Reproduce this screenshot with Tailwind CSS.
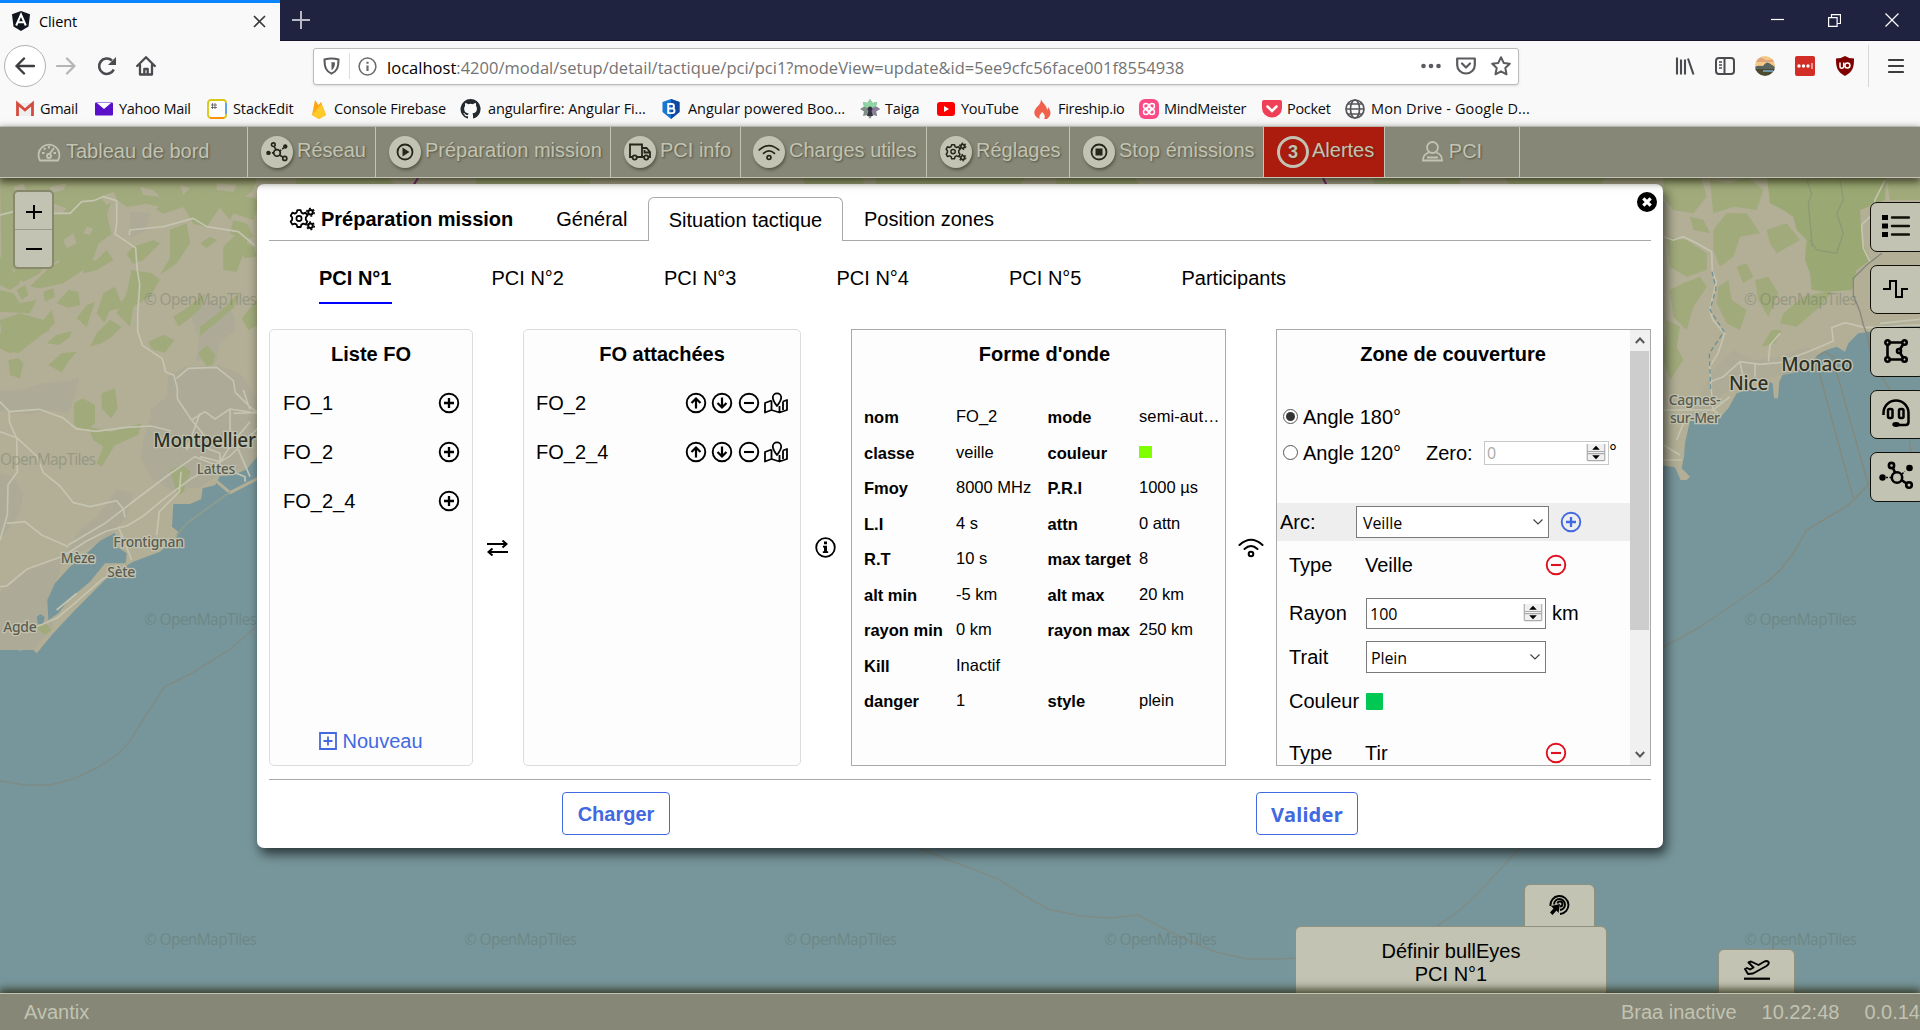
<!DOCTYPE html>
<html lang="fr">
<head>
<meta charset="utf-8">
<title>Client</title>
<script src="https://cdn.jsdelivr.net/npm/@tailwindcss/browser@4"></script>
</head>
<body class="w-[1920px] h-[1030px] overflow-hidden flex flex-col bg-[#c2c3b2] font-['Liberation_Sans',Arial,sans-serif] text-[20px] leading-6 text-black">

<svg class="hidden">
  <defs>
    <symbol id="net" viewBox="0 0 24 24"><g fill="none" stroke="currentColor" stroke-width="1.8"><circle cx="12" cy="13" r="3.6"/><circle cx="8" cy="4" r="2"/><circle cx="20.5" cy="19" r="2.2"/><path d="M9 6l2 4M14.8 15.3l4 2.6"/><path d="M3 13h5M15 11l5-4" stroke-dasharray="2 1.5"/></g><circle cx="2.6" cy="13" r="2.4" fill="currentColor"/><circle cx="21" cy="6" r="2.4" fill="currentColor"/></symbol>
    <symbol id="gears" viewBox="0 0 26 24"><g fill="none" stroke="currentColor"><path d="M7.800 3.200h3.400l.7 2.400 1.900 1 2.300-.9 1.700 2.900-1.500 1.900v2.200l1.500 1.900-1.700 2.900-2.300-.9-1.900 1-.7 2.400H7.800l-.7-2.400-1.900-1-2.300.9-1.700-2.900 1.500-1.900v-2.200L1.200 8.600l1.700-2.900 2.300.9 1.900-1z" stroke-width="1.800" stroke-linejoin="round"/><circle cx="9.500" cy="11.500" r="2.600" stroke-width="1.700"/><circle cx="21" cy="5.200" r="2.300" stroke-width="2"/><circle cx="21" cy="5.200" r="3.800" stroke-width="1.400" stroke-dasharray="2 1.980"/><circle cx="21" cy="18.800" r="2.300" stroke-width="2"/><circle cx="21" cy="18.800" r="3.800" stroke-width="1.400" stroke-dasharray="2 1.980"/></g></symbol>
    <symbol id="wifi" viewBox="0 0 26 20"><g fill="none" stroke="currentColor" stroke-width="2" stroke-linecap="round"><path d="M1.500 7Q13-3.500 24.500 7"/><path d="M6.500 11Q13 5 19.500 11"/><circle cx="13" cy="16" r="2.300"/></g></symbol>
    <symbol id="plusc" viewBox="0 0 22 22"><g fill="none" stroke="currentColor" stroke-width="1.9"><circle cx="11" cy="11" r="9.300"/><path d="M11 6v10M6 11h10" stroke-width="2.300"/></g></symbol>
    <symbol id="minusc" viewBox="0 0 22 22"><g fill="none" stroke="currentColor" stroke-width="1.9"><circle cx="11" cy="11" r="9.300"/><path d="M6 11h10" stroke-width="2.100"/></g></symbol>
    <symbol id="upc" viewBox="0 0 22 22"><g fill="none" stroke="currentColor" stroke-width="1.9"><circle cx="11" cy="11" r="9.300"/><path d="M11 16.500V7M6.500 11L11 6.500l4.500 4.500" stroke-width="2.200"/></g></symbol>
    <symbol id="downc" viewBox="0 0 22 22"><g fill="none" stroke="currentColor" stroke-width="1.9"><circle cx="11" cy="11" r="9.300"/><path d="M11 5.500V15M6.500 11l4.500 4.500 4.500-4.500" stroke-width="2.200"/></g></symbol>
    <symbol id="mapm" viewBox="0 0 24 22"><g fill="none" stroke="currentColor" stroke-width="1.800" stroke-linejoin="round"><path d="M13 14C9.500 9.500 8.800 7.500 8.800 5.500a4.200 4.200 0 0 1 8.400 0C17.200 7.500 16.500 9.500 13 14z"/><path d="M7.500 8.500L1 11v9.500L7.500 18l8 2.500L23 18V8l-4 1.500M7.500 8.500V18M15.500 14v6.500M19 9.500V18"/></g></symbol>
    <symbol id="spin" viewBox="0 0 20 20"><path d="M1 1h18v18H1z" fill="#f0f0f0"/><path d="M.8 1v17.500M19.200 1v17.500M1 9h18M1 11.200h18M1 18.500h18" stroke="#aaa" stroke-width="1.200"/><path d="M10 3l4 4H6zM10 17l4-4H6z"/></symbol>
  </defs>
</svg>

<!-- Browser chrome -->
<header class="h-[127px] shrink-0 bg-[#f9f9fa] border-b border-[#dcdcd8] font-['Open_Sans','Noto_Sans',sans-serif] text-[#0c0c0d]">
  <div class="h-[41px] bg-[#202340] border-b border-[#14152b] flex items-center text-white">
    <div class="w-[280px] h-[41px] bg-[#f9f9fa] border-t-[3px] border-[#0a84ff] text-black flex items-center pl-[11px] pr-[14px] pt-px">
      <svg class="w-5 h-5 -mt-[2px]" viewBox="0 0 20 20"><path d="M10 0l9 3.200-1.500 12.300L10 20l-7.500-4.500L1 3.200z" fill="#10141c"/><path d="M5.200 14.500L10 3.500l4.800 11M7 11.200h6" fill="none" stroke="#fff" stroke-width="2"/></svg>
      <span class="ml-2 text-[14.5px] tracking-[-0.1px]">Client</span>
      <svg class="ml-auto w-[13px] h-[13px] -mt-px" viewBox="0 0 13 13" stroke="#3a3a3c" stroke-width="1.700"><path d="M1 1l11 11M12 1L1 12"/></svg>
    </div>
    <svg class="ml-3 w-[18px] h-[18px]" viewBox="0 0 18 18" stroke="#b9bac6" stroke-width="2"><path d="M9 0v18M0 9h18"/></svg>
    <div class="ml-auto mr-[21px] flex items-center gap-[44px]">
      <svg class="w-[13px] h-[14px]" viewBox="0 0 13 14"><path d="M0 6.500h13" stroke="#fff" stroke-width="1.200"/></svg>
      <svg class="w-[13px] h-[13px]" viewBox="0 0 13 13" fill="none" stroke="#fff" stroke-width="1.200"><path d="M.6 3.600h8.500v8.800H.6zM3.500 3.500V.6h9v8.900H9.200"/></svg>
      <svg class="w-[14px] h-[14px]" viewBox="0 0 14 14" stroke="#fff" stroke-width="1.200"><path d="M.5.5l13 13M13.500.5l-13 13"/></svg>
    </div>
  </div>
  <div class="h-[50px] flex items-center pl-[4px] pr-[16px] text-[#4a4a4f]">
    <div class="w-[42px] h-[42px] rounded-full bg-white border border-[#b1b1b3] flex items-center justify-center">
      <svg class="w-5 h-5" viewBox="0 0 20 20" fill="none" stroke="#3d3d40" stroke-width="2.400" stroke-linecap="round" stroke-linejoin="round"><path d="M19 10H1.500M9 2.500L1.500 10 9 17.500"/></svg>
    </div>
    <svg class="ml-[10px] w-5 h-5" viewBox="0 0 20 20" fill="none" stroke="#b5b5b8" stroke-width="2.200" stroke-linecap="round" stroke-linejoin="round"><path d="M1 10h17.500M11 2.500L18.500 10 11 17.500"/></svg>
    <svg class="ml-[21px] w-5 h-5" viewBox="0 0 20 20" fill="none" stroke="#4a4a4f" stroke-width="2.600"><path d="M16.800 13.500A7.700 7.700 0 1 1 15 4.500"/><path d="M19 1v8h-8z" fill="#4a4a4f" stroke="none"/></svg>
    <svg class="ml-[19px] w-5 h-5" viewBox="0 0 20 20" fill="none" stroke="#4a4a4f" stroke-width="2.300" stroke-linejoin="round" stroke-linecap="round"><path d="M1.200 10L10 1.200 18.800 10M4 9v9.500h12V9M8.300 18v-5h3.400v5"/></svg>
    <div class="ml-[157px] w-[1206px] h-[37px] bg-white border border-[#bcbcbc] rounded-[3px] shadow-sm flex items-center pl-[9px] pr-[7px] text-[#737373]">
      <svg class="w-[17px] h-[18px]" viewBox="0 0 17 18" fill="none" stroke="#5a5a5f" stroke-width="2"><path d="M1.500 2.500q7-2 14 0c0 8-1.500 11.500-7 14.200C3 14 1.500 10.500 1.500 2.500z"/><path d="M8.500 5v8.500q3.500-2.500 3.500-8z" fill="#5a5a5f" stroke="none"/></svg>
      <div class="ml-[9px] w-px h-[26px] bg-[#ddd]"></div>
      <svg class="ml-[8px] w-[19px] h-[19px]" viewBox="0 0 19 19" fill="none" stroke="#6a6a6e" stroke-width="1.500"><circle cx="9.500" cy="9.500" r="8.400"/><path d="M9.500 8.500v5.500M9.500 4.700v2" stroke-width="2.200"/></svg>
      <span class="ml-[10px] w-[860px] whitespace-nowrap text-[16.5px] tracking-[0.02px] pt-[3px]"><span class="text-black">localhost</span>:4200/modal/setup/detail/tactique/pci/pci1?modeView=update&amp;id=5ee9cfc56face001f8554938</span>
      <div class="ml-auto flex items-center gap-[15px]">
        <svg class="w-5 h-5" viewBox="0 0 20 20" fill="#5a5a5f"><circle cx="2.500" cy="10" r="2.300"/><circle cx="10" cy="10" r="2.300"/><circle cx="17.500" cy="10" r="2.300"/></svg>
        <svg class="w-5 h-5" viewBox="0 0 20 20" fill="none" stroke="#5a5a5f" stroke-width="2.200" stroke-linecap="round" stroke-linejoin="round"><path d="M1.200 2.500h17.600V9a8.800 8.500 0 0 1-17.600 0z"/><path d="M6 7.500l4 4 4-4"/></svg>
        <svg class="w-5 h-5" viewBox="0 0 20 20" fill="none" stroke="#5a5a5f" stroke-width="2" stroke-linejoin="round"><path d="M10 1.200l2.700 5.700 6.100.8-4.500 4.300 1.200 6.300L10 15.300l-5.500 3L5.700 12 1.200 7.700l6.100-.8z"/></svg>
      </div>
    </div>
    <div class="ml-auto flex items-center gap-5">
      <svg class="w-5 h-5" viewBox="0 0 20 20" stroke="#4a4a4f" stroke-width="2.100"><path d="M2 1.500v17M6 3.500v15M10 3.500v15M13 2.500l5.500 16"/></svg>
      <svg class="w-5 h-5" viewBox="0 0 20 20" fill="none" stroke="#4a4a4f" stroke-width="2"><rect x="1" y="2" width="18" height="16" rx="3"/><path d="M9.500 2v16"/><path d="M4 6h3M4 9h3M4 12h3" stroke-width="1.300"/></svg>
      <svg class="w-5 h-5" viewBox="0 0 20 20"><clipPath id="av"><circle cx="10" cy="10" r="10"/></clipPath><g clip-path="url(#av)"><path d="M0 0h20v12H0z" fill="#f3c987"/><path d="M0 3q6-3 9 0t11-1v4H0z" fill="#e0a37c"/><path d="M0 11q3-2 8-1 3-5 6-3l6 4v4H0z" fill="#5a6460"/><path d="M0 13h20v7H0z" fill="#4b4a2e"/><path d="M8 14h10v2H8z" fill="#6d95a8"/></g></svg>
      <svg class="w-5 h-5" viewBox="0 0 20 20"><rect width="20" height="20" rx="2" fill="#d32d27"/><g fill="#fff"><circle cx="4" cy="10" r="1.700"/><circle cx="8.500" cy="10" r="1.700"/><circle cx="13" cy="10" r="1.700"/><path d="M16.500 7h1v6h-1z"/></g></svg>
      <svg class="w-5 h-5" viewBox="0 0 20 20"><path d="M10 0q4 2.500 9 2.500c0 9-1 13-9 17.500C2 15.500 1 11.500 1 2.500Q6 2.500 10 0z" fill="#800000"/><path d="M5 6.500v4q0 1.700 1.800 1.700 1.900 0 1.900-1.700v-4" fill="none" stroke="#fff" stroke-width="1.500"/><circle cx="12.400" cy="9.400" r="2.500" fill="none" stroke="#fff" stroke-width="1.500"/></svg>
    </div>
    <div class="ml-[13px] w-px h-[42px] bg-[#d7d7db]"></div>
    <svg class="ml-[19px] w-4 h-4" viewBox="0 0 16 16" stroke="#3d3d40" stroke-width="2.200" stroke-linecap="round"><path d="M1 2h14M1 8h14M1 14h14"/></svg>
  </div>
  <div class="h-[35px] flex items-center text-[14.5px] tracking-[-0.3px] whitespace-nowrap pl-[15px] pb-px pt-[2px]">
    <div class="w-[79px] flex items-center gap-[5px]"><svg class="w-5 h-5" viewBox="0 0 20 20"><path d="M3 4h14v13H3z" fill="#eee"/><path d="M2.500 17V4.500L10 11l7.500-6.500V17" fill="none" stroke="#d54b3d" stroke-width="2.800"/></svg>Gmail</div>
    <div class="w-[113px] flex items-center gap-[5px]"><svg class="w-5 h-5" viewBox="0 0 20 20"><rect x="1" y="3.500" width="18" height="13" rx="1" fill="#5a0fc8"/><path d="M3 4h14l-7 6z" fill="#fff"/></svg>Yahoo Mail</div>
    <div class="w-[102px] flex items-center gap-[6px] tracking-[-0.1px]"><svg class="w-5 h-5" viewBox="0 0 20 20"><rect x="1" y="1" width="18" height="18" rx="3" fill="#fff" stroke="#d9c716" stroke-width="1.800"/><path d="M19 4v11" stroke="#4aa3ff" stroke-width="1.800"/><path d="M3 19h14" stroke="#ff9412" stroke-width="2"/><path d="M5.500 4v6M8 4v6M4 6h6M4 8.500h6" stroke="#555" stroke-width=".8"/></svg>StackEdit</div>
    <div class="w-[151px] flex items-center gap-[5px] tracking-[-0.2px]"><svg class="w-5 h-5" viewBox="0 0 20 20"><path d="M3 16L6 1l3.500 5L12 3l5 13-7 4z" fill="#ffa712"/><path d="M3 16L12.500 5 17 16l-7 4z" fill="#ffcb2b"/></svg>Console Firebase</div>
    <div class="w-[201px] flex items-center gap-[7px] tracking-[-0.1px]"><svg class="w-[21px] h-5" viewBox="0 0 16 16"><path fill="#24292e" d="M8 0a8 8 0 0 0-2.530 15.590c.4.070.55-.17.550-.38v-1.490c-2.010.37-2.530-.49-2.690-.94-.09-.23-.48-.94-.82-1.130-.28-.15-.68-.52-.01-.53.630-.01 1.080.58 1.230.82.720 1.210 1.870.87 2.330.66.070-.52.280-.87.510-1.070-1.780-.2-3.640-.89-3.640-3.950 0-.87.310-1.590.82-2.150-.08-.2-.36-1.020.08-2.120 0 0 .67-.21 2.200.82a7.500 7.500 0 0 1 4 0c1.530-1.040 2.200-.82 2.200-.82.440 1.100.160 1.920.080 2.120.510.560.820 1.270.820 2.150 0 3.070-1.870 3.750-3.650 3.950.290.250.540.730.540 1.480v2.200c0 .21.150.46.550.38A8 8 0 0 0 8 0z"/></svg>angularfire: Angular Fi...</div>
    <div class="w-[199px] flex items-center gap-[7px] tracking-[-0.05px]"><svg class="w-5 h-5" viewBox="0 0 20 20"><path d="M10 0l8.500 3v10L10 20 1.500 13V3z" fill="#1976d2"/><path d="M10 0l8.500 3v10L10 20z" fill="#0d47a1"/><path d="M7.200 5h3.500a2.200 2.200 0 0 1 0 4.500H7.200h4a2.300 2.300 0 0 1 0 4.600h-4z" fill="none" stroke="#fff" stroke-width="1.900"/></svg>Angular powered Boo...</div>
    <div class="w-[76px] flex items-center gap-[5px]"><svg class="w-5 h-5" viewBox="0 0 20 20"><path d="M10 0l2.500 4L17 3l-1 4.500 4 2.500-4 2.500 1 4.500-4.500-1L10 20l-2.500-4L3 17l1-4.500L0 10l4-2.500L3 3l4.500 1z" fill="#7f8f86"/><path d="M10 0l2.500 4L17 3l-1 4.500L10 10 4 7.500 3 3l4.500 1z" fill="#8fd5a3"/><path d="M16 7.500l4 2.500-4 2.500 1 4.500-7-7z" fill="#8a7a9b"/><path d="M10 7.500a2.500 2.500 0 0 1 1.500 4.500l1.500 5h-6l1.500-5A2.500 2.500 0 0 1 10 7.500z" fill="#363043"/></svg>Taiga</div>
    <div class="w-[97px] flex items-center gap-[5px]"><svg class="w-5 h-5" viewBox="0 0 20 20"><rect x="1" y="3" width="18" height="14" rx="3" fill="red"/><path d="M8 7l5 3-5 3z" fill="#fff"/></svg>YouTube</div>
    <div class="w-[106px] flex items-center gap-[5px]"><svg class="w-5 h-5" viewBox="0 0 20 20"><path d="M8 0c1 4 6 6 6 11 1-1 1-2 1-3 3 4 4 8-1 12h-3c2-3 0-5-2-7-1 2-4 4-2 7C-1 17 .5 11 5 7c2-2 3-4 3-7z" fill="#f0614e"/></svg>Fireship.io</div>
    <div class="w-[123px] flex items-center gap-[5px]"><svg class="w-5 h-5" viewBox="0 0 20 20"><rect width="20" height="20" rx="6" fill="#fb4b87"/><g fill="none" stroke="#fff" stroke-width="1.400"><circle cx="10" cy="10" r="2.400"/><circle cx="7" cy="7" r="2.500"/><circle cx="13" cy="7" r="2.500"/><circle cx="7" cy="13" r="2.500"/><circle cx="13" cy="13" r="2.500"/></g></svg>MindMeister</div>
    <div class="w-[83px] flex items-center gap-[5px]"><svg class="w-5 h-5" viewBox="0 0 20 20"><path d="M2 1h16q2 0 2 2v6a10 9.500 0 0 1-20 0V3q0-2 2-2z" fill="#ee4056"/><path d="M5.500 7.500L10 12l4.500-4.500" fill="none" stroke="#fff" stroke-width="2.500" stroke-linecap="round"/></svg>Pocket</div>
    <div class="flex items-center gap-[6px] tracking-[0.15px]"><svg class="w-5 h-5" viewBox="0 0 20 20" fill="none" stroke="#55555a" stroke-width="1.700"><circle cx="10" cy="10" r="9"/><ellipse cx="10" cy="10" rx="4.500" ry="9"/><path d="M1 10h18M3 5h14M3 15h14"/></svg>Mon Drive - Google D...</div>
  </div>
</header>

<!-- Application toolbar -->
<nav class="relative z-20 h-[51px] shrink-0 bg-[#868777] border-b border-[#c2c3b2] flex text-[#c2c3b2] whitespace-nowrap shadow-[0_3px_8px_1px_rgba(30,30,10,.75)] [text-shadow:1px_1px_2px_rgba(50,50,30,.6)]">
  <div class="w-[248px] border-r border-[#c2c3b2] flex items-center pl-[37px] gap-[5px]">
    <svg class="w-6 h-5" viewBox="0 0 24 20" fill="none" stroke="currentColor" stroke-width="1.800"><path d="M3 18.500a10.500 10.500 0 1 1 18 0z"/><path d="M12 4v2.500M5 11h2.500M16.500 11H19M7 6l1.500 1.500M17 6l-4.500 6"/><circle cx="12" cy="14" r="2"/></svg><span class="-mt-[2px]">Tableau de bord</span></div>
  <div class="w-[128px] border-r border-[#c2c3b2] flex items-center pl-[13px] gap-[4px]"><span class="w-8 h-8 rounded-full bg-[#c2c3b2] text-[#25251a] flex items-center justify-center shadow-[1px_2px_3px_rgba(40,40,20,.5)]"><svg class="w-[22px] h-[22px]"><use href="#net"/></svg></span><span class="-mt-[4px]">Réseau</span></div>
  <div class="w-[235px] border-r border-[#c2c3b2] flex items-center pl-[13px] gap-[4px]"><span class="w-8 h-8 rounded-full bg-[#c2c3b2] text-[#25251a] flex items-center justify-center shadow-[1px_2px_3px_rgba(40,40,20,.5)]"><svg class="w-[18px] h-[18px]" viewBox="0 0 18 18"><circle cx="9" cy="9" r="7.500" fill="none" stroke="currentColor" stroke-width="1.800"/><path d="M6.500 4.500L13.500 9l-7 4.500z" fill="currentColor"/></svg></span><span class="-mt-[4px]">Préparation mission</span></div>
  <div class="w-[130px] border-r border-[#c2c3b2] flex items-center pl-[13px] gap-[4px]"><span class="w-8 h-8 rounded-full bg-[#c2c3b2] text-[#25251a] flex items-center justify-center shadow-[1px_2px_3px_rgba(40,40,20,.5)]"><svg class="w-[22px] h-[18px]" viewBox="0 0 22 18" fill="none" stroke="currentColor" stroke-width="1.800"><path d="M3.500 14H1V1.500h12V14H8M13 5h4.500L21 9v5h-1.500M15 14h-2M15.500 7v2.500H20"/><circle cx="5.700" cy="14.500" r="2.100"/><circle cx="17.200" cy="14.500" r="2.100"/></svg></span><span class="-mt-[4px]">PCI info</span></div>
  <div class="w-[186px] border-r border-[#c2c3b2] flex items-center pl-[12px] gap-[4px]"><span class="w-8 h-8 rounded-full bg-[#c2c3b2] text-[#25251a] flex items-center justify-center shadow-[1px_2px_3px_rgba(40,40,20,.5)]"><svg class="w-[22px] h-[17px]"><use href="#wifi"/></svg></span><span class="-mt-[4px]">Charges utiles</span></div>
  <div class="w-[143px] border-r border-[#c2c3b2] flex items-center pl-[13px] gap-[4px]"><span class="w-8 h-8 rounded-full bg-[#c2c3b2] text-[#25251a] flex items-center justify-center shadow-[1px_2px_3px_rgba(40,40,20,.5)]"><svg class="w-[22px] h-[20px]"><use href="#gears"/></svg></span><span class="-mt-[4px]">Réglages</span></div>
  <div class="w-[194px] border-r border-[#c2c3b2] flex items-center pl-[13px] gap-[4px]"><span class="w-8 h-8 rounded-full bg-[#c2c3b2] text-[#25251a] flex items-center justify-center shadow-[1px_2px_3px_rgba(40,40,20,.5)]"><svg class="w-[18px] h-[18px]" viewBox="0 0 18 18"><circle cx="9" cy="9" r="7.500" fill="none" stroke="currentColor" stroke-width="1.800"/><path d="M5.500 5.500h7v7h-7z" fill="currentColor"/></svg></span><span class="-mt-[4px]">Stop émissions</span></div>
  <div class="w-[121px] border-r border-[#c2c3b2] bg-[#ab1b0e] flex items-center pl-[13px] gap-[3px]"><span class="w-8 h-8 rounded-full border-[3px] border-[#c2c3b2] font-bold text-[18px] flex items-center justify-center">3</span><span class="-mt-[4px]">Alertes</span></div>
  <div class="w-[135px] border-r border-[#c2c3b2] flex items-center justify-center gap-[6px]"><svg class="w-[21px] h-[21px] -mt-[2px]" viewBox="0 0 21 21" fill="none" stroke="currentColor" stroke-width="1.800"><circle cx="10.500" cy="6.500" r="5.500"/><path d="M7 11.500c-4 1-6 4-6 8h19c0-4-2-7-6-8M5 16.500h11"/></svg><span class="-mt-[3px]">PCI</span></div>
</nav>

<main class="relative h-[815px] shrink-0 overflow-hidden bg-[#77969b]">
  <svg class="absolute inset-0 w-full h-full" viewBox="0 178 1920 815">
    <path fill="#b2af96" d="M250 170h1400v40H250z"/>
    <path fill="#a0aa7b" d="M300 170h80l30 30h-120zM480 170h110v30H470zM800 170h60l10 30h-60zM880 170h150l-20 30H870zM1060 170h70l20 30h-100zM1370 170h90v30h-80zM1500 170h110l-20 30h-70z"/>
    <g transform="translate(0 180) scale(.33333)">
      <path fill="#b2af96" d="M-9-30H800V600H771V895L690 938 640 965 560 1030 530 1070 480 1115 400 1145 330 1185 290 1225 220 1295 160 1360 110 1420 95 1405 60 1412 30 1398-9 1380z"/>
      <path fill="#adaa97" d="M0 632l60-2 70-20 80-8 28-12-8 40-24 70-60-10-60 12-86-10zM570 400l60-40 70 40 8 50-50 40-10 60-60-10 10-60zM450 690l50-40 5-60 50-30 100-4 70 30 46 70v230l-50-20-60 15-60 40-90 10-60-40-30-60 12-60 20-60zM0 880l40 10 30 50-10 60-30 40-30 40zM390 95l60 5-10 50-50 25zM230 1060l60-50 60-80 50 10-20 70-60 70-130 60zM0 1240l80-70 120-50-50 130 10 90-60 70H0z"/>
      <g fill="#a0aa7b">
        <path d="M0-9H770l-10 40-40 30-30 40-30-20-40 60-40-10-30-50-60 20-50-30-60 10-40-30-20 50 15 60-40 30-20 60-70 20-30-30-30 20-50-10-30 30-40-20-20 10z" opacity=".95"/>
        <path d="M222 670l25-15 38 20v55l-30 25-32-20zM305 640l40-15 8 60-20 30-28-30zM265 740l70 15 90-25-10 35-70 30-40 65-15-10 20-50-30-20zM445 485l45-20 33 15-28 38-40-10zM520 410l40-25 55-45-10 40-30 30-40 30zM600 440l60-45 60-60-20 50-60 50-40 32zM595 520l25-25 25 30-5 28-20 5zM725 415l50-60v80l-30 15zM510 150l50-20 10 60-40 60-50 35 30-50zM400 200l60-20 20 10-50 50-30 12-20-30zM25 540l30-5 15 15-10 45-30-10zM145 555l40-35 45-5-25 30-20 32zM270 500l20-40 40-40 35 20-30 30-30 20zM140 490l30-25 45-12-8 20-30 22zM230 415l30-40 25-10-10 30-15 45zM290 400l20-60 35-20 15 40 28 18-60 15-15 35zM170 370l35-40 30 5 5 40-35 8zM0 420l60-20 70 20 25-30 10 40-60 50-50 40-45-10zM0 330l40 10 20 30 50-10-20 40-90-5zM90 320l60-60 90-40 10 50-60 40-70 15zM40 290l40-30 60-20-20 40-50 25zM395 270l60 10 25 20-30 50-50 30-10 60-40-40 30-60zM670 200l30-30 50-10-20 60-20 55-40-5zM640 60l60-20 80 20-20 60-60-20-10 20zM720 180l40 20 12 30-40 5zM510 870l35-15 28 20-20 40 0 20-20 10-10-30zM105 1340l30-10 20 20-20 15z"/>
        <path d="M0 230l30 10 10 40 20-20 0 50-30 20-30-15zM0 460l25-15 30 25 20-10 5 30-50 30-30-15zM100 440l30-15 20 25-35 20zM50 330l25-15 10 30-20 15zM130 335l30-10 5 25-30 15zM250 250l40-10 30-30 20 30-50 30-40 10zM560 20l50 10-20 50-30 10zM700 120l40 10 20 40-30 10-40-20zM600 190l30-20 20 10-30 25z"/>
      </g>
      <path fill="#b2af96" d="M300 50l40-15 10 20-30 20zM40 20l30-10 10 25-30 10zM150 20l50-10-10 20-40 10zM60 110l30 15-10 20-40-10zM160 70l40 15-15 20-40-10zM190 180l30-20 10 30-30 15zM420 20l40 10 20 20-50-5zM540 15l30 10-20 20zM650 10l60 5-10 20-50-5zM260 140l20 5-10 20-20-5zM430 70l50 10-20 10-30-5z"/>
      <g fill="#77969b"><path d="M772 830L740 868 700 885 660 888 645 916 608 925 603 958 570 972 520 972 516 1040 540 1060 690 935 772 893z"/><path d="M345 1058l-45 25-40 37-50 40-45 50-23 50 3 60 30-20 35-45 60-50 45-55 62 0 3-30-32-22z"/><path d="M110 1310l12-8 12 10-5 20-15 0z"/></g>
      <path d="M645 900l45 38 82-42" fill="none" stroke="#b2af96" stroke-width="9"/>
      <path d="M690 936L560 1030 530 1066" fill="none" stroke="#8f9d8e" stroke-width="5"/>
      <g fill="none" stroke="#c4c4b0" stroke-width="5" stroke-linejoin="round"><path d="M0 665l28 30 90-7 70 25 40 33 60 8 90-12 75-4 60 15M28 695l0 30 22 50 2 100-28 40-2 90-22 75M0 755l50 18 60 55 20 50 50 40 40 50 50 12 80-18 20 25 5 25M0 105l40-10 55 5 115 0 35-35 35-3 30-12 40 12 0 70-5 30 30 20 32 22 4 60 8 50-6 90 0 50 14 42 60 40 10 40 25 10 10 40 0 30 40 60 40 50M388 165l2-15 100-10 90-25 40 25 95 15 50 42M530 595l35-30 85-3 50 40 6 35 40 40 25 20M0 1220l20-2 60-50 110-40 70-45 60-30 60-15 50-30 60-50 80-60 120-70 80-80 40-45M205 1095l110-65 110-85 80-60 80-55 150 60 0 15M395 1140l-40-100M470 1065l8-70 60-60 5-60M575 720l40-25 30 22 45-30 80 12M20 1030l55-5 50 40 80 35M600 830l60 15 40-60 50-60M580 790l80 30 0 60M750 690l-20-60M690 690l0 60 60 140"/><path d="M110 1340l60-25 60-50 80-70 30-12M170 1290l60-50M700 700l72-2M600 700l-40 110"/></g>
      <g font-family="'Noto Sans',sans-serif" font-weight="500" fill="#5a5c50" stroke="#c2c2b0" stroke-width="8" paint-order="stroke" font-size="42"><text x="590" y="882" textLength="116">Lattes</text><text x="340" y="1102" textLength="212">Frontignan</text><text x="182" y="1148" textLength="104">Mèze</text><text x="322" y="1190" textLength="84">Sète</text><text x="10" y="1357" textLength="100">Agde</text><text x="460" y="802" font-size="57" fill="#2e3026" textLength="308">Montpellier</text></g>
    </g>
    <g fill="none" stroke="#7f8c86" stroke-width="1.500"><path d="M0 781l25 4h25l23-6 24-11 21-14 11-12 14-22 21-33 28-14 37-23 27-23"/><path d="M918 848l80 31 27 17 23 13 32 7 30 2 28-3 42 22 36 15 31 7h33l16-1M1437 926q23-14 40-32t43-46M1660 649l40-22 69-47"/></g>
    <g transform="translate(1640 180) scale(.33333)">
      <path fill="#b2af96" d="M-40-20H900V430L830 440 760 435 700 440 690 455 655 460 625 490 615 515 590 500 560 510 540 520 500 560 430 580 418 605 414 655 402 655 398 610 385 605 370 615 290 640 265 685 225 730 150 722 135 790 132 830 125 865 150 890 140 900 122 900 105 862 60 855H-40z"/>
      <path fill="#9aa873" d="M380-20H740L735 60 660 90 665 180 690 240 650 270 635 330 560 335 515 330 510 280 495 240 500 180 470 150 460 110 430 90 390 70z"/>
      <path fill="#a0aa7b" d="M70-20l110 0 20 70-40 50-60-10-30-40zM210 0l60 10 50-20 50 40-20 60-70-10-60 20zM220 150l40-50 60 0 40 60-60 10-20 60-40 30-20-50zM80 170l60 10 60 40 0 50-60 20-50-30zM90 330l40-20 50-20 20 30-40 60-20 70-40-40zM235 320l30-20 10 60 45 30-20 60-40-20-30-60zM345 300l40-10 30 50-30 70-30-50zM380 150l60-20 40 50-70 40-20-30zM430 400l60-50 90-20-40 50-70 60-50-10zM395 450l30 0-20 40-40 10zM80 420l40 20-10 60 20 40-40 60-20-60zM740 0h100v60h-90zM150 110l40 10 20 40-50-10zM290 260l30-10 20 40-30 20z"/>
      <path fill="#adaa97" opacity=".7" d="M220 570l60-60 60 30 80-10 80-30 40 20-80 60-60 10-60 20-60 10-40 30-30 50-60 10z"/>
      <g fill="none" stroke="#c4c4b0" stroke-width="5"><path d="M70 170l30 10 30-10 40 20 45 25 2 60 12 30-20 85 10 30 35 40-20 60-25 40 5 70 5 60 15 10M210 605l40-15 50-45 60 8 60-5 50-20 40-15 70-30-5-40 40-15 60 15 200-10M385 545l5-50 30-35M735 0l-30 60-5 40-35 35 5 70 20 40M70 690l150 0 50-40M70 795l50 30M130 730l-20 50M345 550v40M720 430l120-12M300 545l10 50M70 840h55"/><path stroke="#6d9097" stroke-width="4" stroke-dasharray="14 9" d="M216 275l12 50-18 65 42 65-44 65 4 110"/></g>
      <g fill="none" stroke="#85887a" stroke-width="4"><path d="M725 220l-45 35-40 40 0 50 20 50 10 40 15 40M530 550l110 405M585 560l100 355-60 60-125 75-40 70-40 50-40 38M530 530l25-15 30 20M680 455l10 60M725 590l25 40M808 780l5 40"/><path opacity=".5" d="M500 0l15 40-10 30 12 130M600 0l10 60-20 40 20 60-20 60-60-10-20-30"/></g>
      <g font-family="'Noto Sans',sans-serif" font-weight="500" stroke="#c2c2b0" stroke-width="8" paint-order="stroke"><text x="424" y="574" font-size="57" fill="#2e3026" textLength="214">Monaco</text><text x="267" y="630" font-size="57" fill="#2e3026" textLength="118">Nice</text><text x="86" y="675" font-size="42" fill="#5a5c50" textLength="156">Cagnes-</text><text x="90" y="728" font-size="42" fill="#5a5c50" textLength="150">sur-Mer</text></g>
    </g>
    <g fill="#5a665c" fill-opacity=".32" font-family="'Noto Sans',sans-serif" font-size="15.500"><text x="144" y="305" textLength="113">© OpenMapTiles</text><text x="0" y="465" textLength="96">OpenMapTiles</text><text x="144" y="625" textLength="113">© OpenMapTiles</text><text x="1744" y="305" textLength="113">© OpenMapTiles</text><text x="1744" y="625" textLength="113">© OpenMapTiles</text><text x="144" y="945" textLength="113">© OpenMapTiles</text><text x="464" y="945" textLength="113">© OpenMapTiles</text><text x="784" y="945" textLength="113">© OpenMapTiles</text><text x="1104" y="945" textLength="113">© OpenMapTiles</text><text x="1744" y="945" textLength="113">© OpenMapTiles</text></g>
    <path d="M418 178l-5 8M1323 178l4 8" stroke="#851a80" stroke-width="2"/>
  </svg>

  <!-- Map zoom control -->
  <div class="absolute left-[13px] top-[12px] w-[41px] h-[79px] rounded-[5px] border-2 border-[#88896d] bg-[#c2c3b2] flex flex-col">
    <div class="h-[38px] border-b border-[#9a9b8a] flex items-center justify-center pt-[2px]"><svg class="w-4 h-4" viewBox="0 0 16 16" stroke="#000" stroke-width="2"><path d="M8 1v14M0 8h16"/></svg></div>
    <div class="flex-1 flex items-center justify-center pt-px"><svg class="w-4 h-4" viewBox="0 0 16 16" stroke="#000" stroke-width="2"><path d="M0 8h16"/></svg></div>
  </div>

  <!-- Side tools -->
  <div class="absolute left-[1870px] top-[24px] w-[56px] flex flex-col gap-[13px] text-black">
    <div class="h-[49.500px] border border-[#101008] rounded-[7px] bg-[#c2c3b2] flex items-center pl-[11px] pb-[2px]"><svg class="w-7 h-6" viewBox="0 0 28 24"><path d="M0 1h6v5H0zM0 9.500h6v5H0zM0 18h6v5H0z"/><path d="M10 3.500h17M10 12h17M10 20.500h17" stroke="#101008" stroke-width="2.400" stroke-linecap="round"/></svg></div>
    <div class="h-[49.500px] border border-[#101008] rounded-[7px] bg-[#c2c3b2] flex items-center pl-[12px]"><svg class="w-[26px] h-[18px]" viewBox="0 0 26 18" fill="none" stroke="#000" stroke-width="2"><path d="M0 9h7V1h6v16h6V9h6"/></svg></div>
    <div class="h-[49.500px] border border-[#101008] rounded-[7px] bg-[#c2c3b2] flex items-center pl-[13px] pb-[2px]"><svg class="w-6 h-6" viewBox="0 0 24 24" fill="none" stroke="#000" stroke-width="2.600"><circle cx="3.500" cy="3.500" r="2.200"/><circle cx="20.500" cy="3.500" r="2.200"/><circle cx="3.500" cy="20.500" r="2.200"/><circle cx="20.500" cy="20.500" r="2.200"/><circle cx="15" cy="12" r="2"/><path d="M3.500 6v12M6 3.500h12M6 20.500h12M19 5.500l-3 4.800M19 18.500l-3-4.800"/></svg></div>
    <div class="h-[49.500px] border border-[#101008] rounded-[7px] bg-[#c2c3b2] flex items-center pl-[11px] pb-[3px]"><svg class="w-7 h-7" viewBox="0 0 28 28" fill="none" stroke="#000" stroke-width="2.500"><path d="M1.500 16v-2a12.500 12.500 0 0 1 25 0v9q0 3-3 3H15"/><rect x="6" y="10" width="4.500" height="9" rx="1.500"/><rect x="17" y="10" width="4.500" height="9" rx="1.500"/><ellipse cx="14" cy="25.500" rx="2.500" ry="1.200" fill="#000"/></svg></div>
    <div class="h-[49.500px] border border-[#101008] rounded-[7px] bg-[#c2c3b2] flex items-center pl-[7px] pb-[2px]"><svg class="w-[36px] h-[30px]" viewBox="0 0 36 30" fill="none" stroke="#000" stroke-width="2.600"><circle cx="19" cy="16.500" r="5.200"/><circle cx="13.500" cy="4.500" r="2.600"/><circle cx="31" cy="24" r="2.800"/><path d="M15 7l2 4.500M23.500 19l5 3.500"/><path d="M8 16.500h6M24 13l3-2.500" stroke-width="1.600" stroke-dasharray="2 1.500"/><circle cx="4.500" cy="16.500" r="3.200" fill="#000" stroke="none"/><circle cx="31.500" cy="7" r="3.300" fill="#000" stroke="none"/></svg></div>
  </div>

  <!-- Bottom tools -->
  <div class="absolute left-[1524px] top-[706px] w-[71px] h-[43px] rounded-t-[6px] border border-[#8f907e] bg-[#c2c3b2] flex items-center justify-center pb-[2px]"><svg class="w-[21px] h-5" viewBox="0 0 21 20" fill="none" stroke="#000" stroke-width="1.900"><path d="M1.500 11A9 9 0 1 1 11 19M5 9.500a5.500 5.500 0 1 1 6 5.500M8.500 8.500a2.500 2.500 0 1 1 2.500 3"/><path d="M2 11l9-2-1.500 9-2-2.500L3.500 20 1 17.500l3.500-4z" fill="#000" stroke="none"/></svg></div>
  <div class="absolute left-[1295px] top-[748px] w-[312px] h-[70px] rounded-t-[6px] border border-[#8f907e] bg-[#c2c3b2] pt-[13px] text-center leading-[23px]">Définir bullEyes<br>PCI N°1</div>
  <div class="absolute left-[1718px] top-[771px] w-[77px] h-[50px] rounded-t-[6px] border border-[#8f907e] bg-[#c2c3b2] flex justify-center pt-[10px]"><svg class="w-[26px] h-5" viewBox="0 0 26 20" fill="none" stroke="#000" stroke-width="1.900" stroke-linejoin="round"><path d="M4 14L1 9l2-1 3 1.500 3.500-2L4.500 2.500 7 1.500l7.500 3.500 5-3q4-2 5 0t-2 4L9 13.500z"/><path d="M0 18.700h26" stroke-width="2.200"/></svg></div>

  <!-- Mission preparation dialog -->
  <section class="absolute left-[257px] top-[6px] w-[1406px] h-[664px] rounded-[7px] bg-white shadow-[3px_6px_12px_rgba(0,0,0,.65)] px-3 z-10">
    <svg class="absolute left-[1380px] top-[7.500px] w-5 h-5" viewBox="0 0 20 20"><circle cx="10" cy="10" r="10"/><path d="M6.300 6.300l7.400 7.400M13.700 6.300l-7.400 7.400" stroke="#fff" stroke-width="3.200"/></svg>
    <div class="h-[57px] flex items-end border-b border-[#a9a9a9] whitespace-nowrap">
      <div class="w-[379px] flex items-center h-[44px] pl-[20px] pt-[2px]"><svg class="w-[27px] h-[24px]"><use href="#gears"/></svg><b class="ml-[5px]">Préparation mission</b><span class="ml-[43px]">Général</span></div>
      <div class="w-[195px] h-[44px] -mb-px border border-b-0 border-[#a9a9a9] rounded-t-[6px] bg-white flex items-center justify-center pt-px">Situation tactique</div>
      <div class="h-[44px] flex items-center pl-[21px] pt-[2px]">Position zones</div>
    </div>
    <div class="h-[88px] pl-[50px] pt-[25px] flex whitespace-nowrap">
      <div class="w-[172.500px]"><b class="inline-block h-[38px] pr-px border-b-2 border-[#0000ff]">PCI N°1</b></div>
      <div class="w-[172.500px]">PCI N°2</div><div class="w-[172.500px]">PCI N°3</div><div class="w-[172.500px]">PCI N°4</div><div class="w-[172.500px]">PCI N°5</div><div>Participants</div>
    </div>
    <div class="h-[437px] flex items-stretch">
      <div class="w-[204px] border border-[#dcdcdc] rounded-[5px] bg-[#fdfdfd] pt-[12px] pl-[13px] pr-[12px] flex flex-col">
        <b class="text-center mb-[12px] pr-px">Liste FO</b>
        <div class="h-[49px] flex items-center justify-between">FO_1<svg class="w-[22px] h-[22px]"><use href="#plusc"/></svg></div>
        <div class="h-[49px] flex items-center justify-between">FO_2<svg class="w-[22px] h-[22px]"><use href="#plusc"/></svg></div>
        <div class="h-[49px] flex items-center justify-between">FO_2_4<svg class="w-[22px] h-[22px]"><use href="#plusc"/></svg></div>
        <div class="mt-auto mb-[12px] flex items-center justify-center gap-[5px] text-[#4169e1] pr-px"><svg class="w-[18px] h-[18px]" viewBox="0 0 18 18" fill="none" stroke="currentColor" stroke-width="1.800"><path d="M1 1h16v16H1zM9 4.500v9M4.500 9h9"/></svg>Nouveau</div>
      </div>
      <div class="w-[50px] flex items-center justify-center pr-[2px]"><svg class="w-[21px] h-[16px]" viewBox="0 0 21 16" fill="none" stroke="#000" stroke-width="2"><path d="M0 4h19M15.500 .5L19.500 4l-4 3.500M21 12H2M5.500 8.500L1.500 12l4 3.500"/></svg></div>
      <div class="w-[278px] border border-[#dcdcdc] rounded-[5px] bg-[#fdfdfd] pt-[12px] pl-[12px] pr-[12px] flex flex-col">
        <b class="text-center mb-[12px]">FO attachées</b>
        <div class="h-[49px] flex items-center"><span class="flex-1">FO_2</span><span class="flex gap-[4.500px]"><svg class="w-[22px] h-[22px]"><use href="#upc"/></svg><svg class="w-[22px] h-[22px]"><use href="#downc"/></svg><svg class="w-[22px] h-[22px]"><use href="#minusc"/></svg><svg class="w-[24px] h-[22px]"><use href="#mapm"/></svg></span></div>
        <div class="h-[49px] flex items-center"><span class="flex-1">FO_2_4</span><span class="flex gap-[4.500px]"><svg class="w-[22px] h-[22px]"><use href="#upc"/></svg><svg class="w-[22px] h-[22px]"><use href="#downc"/></svg><svg class="w-[22px] h-[22px]"><use href="#minusc"/></svg><svg class="w-[24px] h-[22px]"><use href="#mapm"/></svg></span></div>
      </div>
      <div class="w-[50px] flex items-center justify-center pr-px"><svg class="w-[21px] h-[21px]" viewBox="0 0 21 21"><circle cx="10.500" cy="10.500" r="9.300" fill="none" stroke="#000" stroke-width="1.800"/><path d="M9 4.500h3v2.700H9zM8 8.700h4v5.500h1.200V16H7.800v-1.800H9v-3.700H8z"/></svg></div>
      <div class="w-[375px] border border-[#a9a9a9] bg-[#fdfdfd] pt-[12px] pl-[12px]">
        <b class="block text-center w-[361px] mb-[33px]">Forme d'onde</b>
        <div class="grid grid-cols-[92px_91.500px_91.500px_1fr] auto-rows-[35.500px] text-[16.5px] leading-[36px] whitespace-nowrap [&>span]:-mt-px">
          <b>nom</b><span>FO_2</span><b>mode</b><span class="tracking-[0.1px]">semi-aut…</span>
          <b>classe</b><span>veille</span><b>couleur</b><span class="pt-[12px]"><i class="block w-[13px] h-[12px] bg-[#7fff00]"></i></span>
          <b>Fmoy</b><span>8000 MHz</span><b>P.R.I</b><span>1000 µs</span>
          <b>L.I</b><span>4 s</span><b>attn</b><span>0 attn</span>
          <b>R.T</b><span>10 s</span><b>max target</b><span>8</span>
          <b>alt min</b><span>-5 km</span><b>alt max</b><span>20 km</span>
          <b>rayon min</b><span>0 km</span><b>rayon max</b><span>250 km</span>
          <b>Kill</b><span>Inactif</span><b></b><span></span>
          <b>danger</b><span>1</span><b>style</b><span>plein</span>
        </div>
      </div>
      <div class="w-[50px] flex items-center justify-center"><svg class="w-[26px] h-[20px]"><use href="#wifi"/></svg></div>
      <div class="w-[375px] border border-[#a9a9a9] bg-[#fdfdfd] flex overflow-hidden">
        <div class="w-[353px] pt-[12px]">
          <b class="block text-center pr-px">Zone de couverture</b>
          <div class="mt-[38px] h-[25px] pl-[6px] flex items-center gap-[5px]"><i class="w-[15px] h-[15px] rounded-full border border-[#555] bg-white flex items-center justify-center"><i class="w-[9px] h-[9px] rounded-full bg-[#333]"></i></i>Angle 180°</div>
          <div class="mt-[11px] h-[25px] pl-[6px] flex items-center"><i class="w-[15px] h-[15px] rounded-full border border-[#555] bg-white mr-[5px]"></i><span class="w-[123px]">Angle 120°</span><span class="w-[58px]">Zero:</span><span class="w-[125px] h-6 bg-white border border-[#c8c8c8] flex items-center justify-between pl-[2px] pr-[2px] font-['Open_Sans',sans-serif] text-[16px] text-[#aaa]">0<svg class="w-5 h-[19px]"><use href="#spin"/></svg></span><span class="-mt-[2px]">°</span></div>
          <div class="mt-[38px] h-[38px] bg-[#eee] flex items-center pl-[3px]"><span class="w-[76px]">Arc:</span><span class="w-[193px] h-8 bg-white border border-[#7a7a7a] flex items-center justify-between pl-[6px] pr-[5px] font-['Open_Sans',sans-serif] text-[16px] tracking-[-0.1px]"><span class="pt-px">Veille</span><svg class="w-[10px] h-[6px]" viewBox="0 0 10 6" fill="none" stroke="#444" stroke-width="1.200"><path d="M.5.500L5 5 9.500.500"/></svg></span><svg class="ml-[11px] w-[22px] h-[22px] text-[#4169e1]"><use href="#plusc"/></svg></div>
          <div class="mt-[11px] h-[26px] pl-[12px] flex items-center"><span class="w-[76px]">Type</span><span class="w-[180px]">Veille</span><svg class="w-[22px] h-[22px] text-[#e01020]"><use href="#minusc"/></svg></div>
          <div class="mt-[20px] h-[31px] pl-[12px] flex items-center"><span class="w-[77px] -mt-px">Rayon</span><span class="w-[180px] h-[31px] bg-white border border-[#7a7a7a] flex items-center justify-between pl-[3px] pr-[2px] font-['Open_Sans',sans-serif] text-[16px]">100<svg class="w-5 h-[19px] -mt-[2px]"><use href="#spin"/></svg></span><span class="ml-[6px] -mt-px">km</span></div>
          <div class="mt-[12px] h-8 pl-[12px] flex items-center"><span class="w-[77px]">Trait</span><span class="w-[180px] h-8 bg-white border border-[#7a7a7a] flex items-center justify-between pl-[4px] pr-[5px] font-['Open_Sans',sans-serif] text-[16px] tracking-[-0.1px]"><span class="pt-[2px]">Plein</span><svg class="w-[10px] h-[6px]" viewBox="0 0 10 6" fill="none" stroke="#444" stroke-width="1.200"><path d="M.5.500L5 5 9.500.500"/></svg></span></div>
          <div class="mt-[15px] h-[26px] pl-[12px] flex items-center"><span class="w-[77px]">Couleur</span><i class="w-[17px] h-[17px] rounded-[1px] bg-[#00c853]"></i></div>
          <div class="mt-[26px] h-[26px] pl-[12px] flex items-center"><span class="w-[76px]">Type</span><span class="w-[180px]">Tir</span><svg class="w-[22px] h-[22px] text-[#e01020]"><use href="#minusc"/></svg></div>
        </div>
        <div class="w-[20px] bg-[#f0f0f0] flex flex-col items-center justify-between">
          <div class="w-full"><div class="h-[21px] flex items-center justify-center"><svg class="w-[10px] h-[7px]" viewBox="0 0 10 7" fill="none" stroke="#555" stroke-width="1.900"><path d="M.8 6L5 1.500 9.200 6"/></svg></div><div class="w-[19px] h-[279px] bg-[#cdcdcd]"></div></div>
          <div class="h-[21px] flex items-center justify-center"><svg class="w-[10px] h-[7px]" viewBox="0 0 10 7" fill="none" stroke="#555" stroke-width="1.900"><path d="M.8 1L5 5.500 9.200 1"/></svg></div>
        </div>
      </div>
    </div>
    <div class="mt-[13px] border-t border-[#a9a9a9] pt-[12px] pl-[293px] flex gap-[586px] font-bold text-[#4169e1]">
      <button class="w-[108px] h-[43px] border border-[#4169e1] rounded-[4px] font-bold">Charger</button>
      <button class="w-[102px] h-[43px] border border-[#4169e1] rounded-[4px] font-bold font-['Noto_Sans',sans-serif] tracking-[0.25px] pt-[3px]">Valider</button>
    </div>
  </section>
</main>

<footer class="relative z-20 h-[37px] shrink-0 bg-[#868777] border-t border-[#c2c3b2] flex items-center pl-[24px] text-[#c2c3b2] whitespace-nowrap shadow-[0_-3px_8px_1px_rgba(40,40,15,.8)]">
  <span>Avantix</span><span class="ml-auto">Braa inactive</span><span class="ml-[25px]">10.22:48</span><span class="ml-[25px]">0.0.14</span>
</footer>
</body>
</html>
